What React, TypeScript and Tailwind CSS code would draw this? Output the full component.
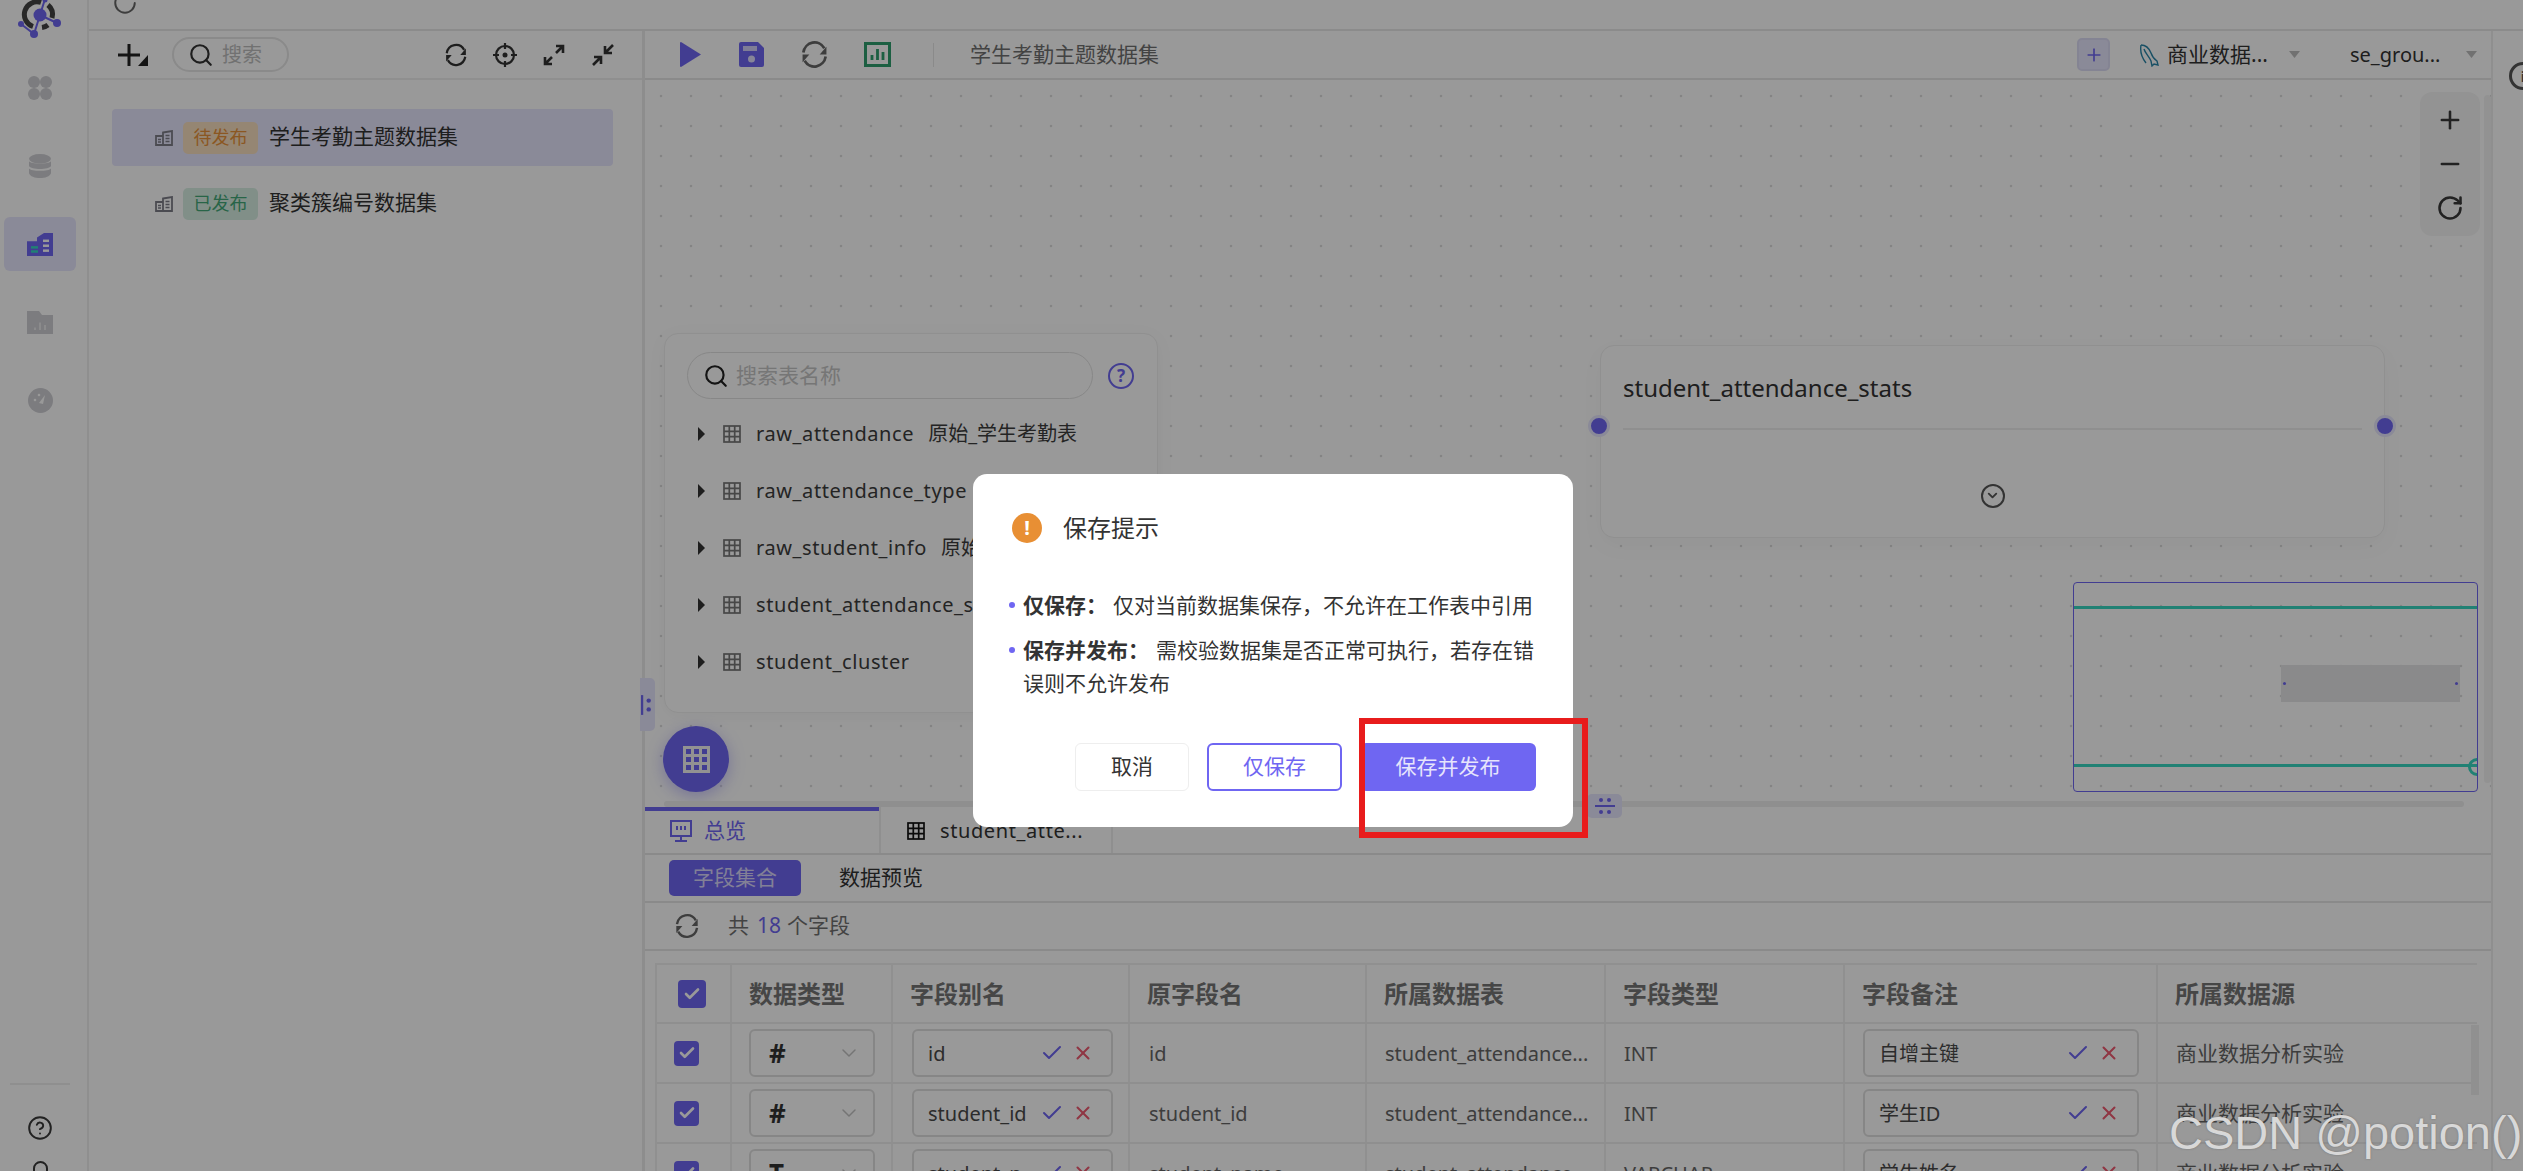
import React from "react";
import { Check, ChevronDown, Plus, Minus, RotateCw, X, Search, CircleHelp } from "lucide-react";

const Sync = ({ className = "" }: { className?: string }) => (
  <svg viewBox="0 0 28 28" className={className} fill="none" stroke="currentColor">
    <path d="M3.2 12A11 11.5 0 0 1 23.5 8" strokeWidth="2.6" />
    <path d="M24.8 16A11 11.5 0 0 1 4.5 20" strokeWidth="2.6" />
    <path d="M25.5 6.5v7.5h-6.5z" fill="currentColor" stroke="none" />
    <path d="M2.5 21.5v-7.500h6.500z" fill="currentColor" stroke="none" />
  </svg>
);

const GridIcon = ({ className = "" }: { className?: string }) => (
  <svg viewBox="0 0 18 18" className={className} fill="none" stroke="currentColor" strokeWidth="1.7">
    <rect x="1" y="1" width="16" height="16" />
    <path d="M6.300 1v16M11.700 1v16M1 6.300h16M1 11.700h16" />
  </svg>
);

const DatasetIcon = ({ className = "", a = "currentColor", b = "#ffffff", c = "#ffffff" }: { className?: string; a?: string; b?: string; c?: string }) => (
  <svg viewBox="0 0 26 28" preserveAspectRatio="none" className={className}>
    <path d="M0 10h10V5.500L17 0h9v28H0z" fill={a} />
    <rect x="4" y="16" width="7" height="3" fill={c} />
    <rect x="4" y="21" width="7" height="3" fill={c} />
    <rect x="16" y="8" width="6" height="3" fill={b} />
    <rect x="16" y="14" width="6" height="3" fill={b} />
    <rect x="16" y="20" width="6" height="3" fill={b} />
  </svg>
);

const SmallDataset = () => (
  <svg viewBox="0 0 18 16" className="h-[16px] w-[18px] text-[#7e7e88]" fill="none" stroke="currentColor" strokeWidth="1.800">
    <path d="M1 6h7v9H1zM8 2.500L17 1v14H8z" />
    <path d="M10.500 5.500h4M10.500 8.500h4M10.500 11.500h4M3 9.500h3M3 12h3" strokeWidth="1.300" />
  </svg>
);

const TableRowItem = ({ name, note }: { name: string; note?: string }) => (
  <div className="flex h-[57px] items-center">
    <svg viewBox="0 0 7 14" className="h-[14px] w-[7px] text-[#333]"><path d="M0 0l7 7-7 7z" fill="currentColor" /></svg>
    <GridIcon className="ml-[18px] h-[18px] w-[18px] text-[#777]" />
    <span className="ml-[15px] whitespace-nowrap text-[20px] tracking-[0.6px] text-[#3c3c3c]">{name}</span>
    {note && <span className="ml-[14px] whitespace-nowrap text-[20px] text-[#3c3c3c]">{note}</span>}
  </div>
);

const Editable = ({ text, w }: { text: string; w: string }) => (
  <div className={`flex h-[48px] items-center rounded-[6px] border-2 border-[#e0e0e0] pl-[14px] pr-[17px] ${w}`}>
    <span className="min-w-0 flex-1 truncate pt-[2px] text-[20px] text-[#4a4a4a]">{text}</span>
    <Check className="ml-[2px] h-[24px] w-[24px] shrink-0 text-[#6f66f2]" strokeWidth={2} />
    <X className="ml-[8px] h-[22px] w-[22px] shrink-0 text-[#ef5a70]" strokeWidth={2.200} />
  </div>
);

const Box = ({ big }: { big?: boolean }) => (
  <div className={`flex items-center justify-center rounded-[4px] bg-[#6f66f2] ${big ? "h-[28px] w-[28px]" : "h-[25px] w-[25px]"}`}>
    <Check className="h-[18px] w-[18px] text-white" strokeWidth={3.500} />
  </div>
);

const rows = [
  { t: "#", alias: "id", raw: "id", type: "INT", note: "自增主键" },
  { t: "#", alias: "student_id", raw: "student_id", type: "INT", note: "学生ID" },
  { t: "T", alias: "student_name", raw: "student_name", type: "VARCHAR", note: "学生姓名" },
];

const cols = "grid-cols-[73px_161px_237px_237px_239px_239px_313px_314px]";

export default function App() {
  return (
    <div className="relative h-[1171px] w-[2523px] overflow-hidden bg-white font-['Noto_Sans','Noto_Sans_CJK_SC',sans-serif] text-[#333]">
      <div className="flex h-full">
        {/* rail */}
        <aside className="flex h-full w-[89px] shrink-0 flex-col items-start border-r-2 border-[#eeeeee] pl-[4px]">
          <div className="h-[61px] w-full shrink-0">
            <svg viewBox="0 0 48 40" className="ml-[13px] h-[40px] w-[48px]">
              <path d="M16 26.500A12.500 12.500 0 0 1 24 2.500" fill="none" stroke="#444" strokeWidth="5" />
              <path d="M31 5A12.500 12.500 0 0 1 35 18" fill="none" stroke="#444" strokeWidth="5" />
              <path d="M31 25A12.500 12.500 0 0 1 25 27.500" fill="none" stroke="#444" strokeWidth="5" />
              <path d="M28 -1L23 15L17 34M23 15L40 23M17 34L4 24" stroke="#6f66f2" strokeWidth="2" fill="none" />
              <circle cx="23" cy="15" r="6.500" fill="#6f66f2" />
              <circle cx="40" cy="23" r="4" fill="#6f66f2" />
              <circle cx="17" cy="34" r="4" fill="#6f66f2" />
              <circle cx="4" cy="24" r="3" fill="#6f66f2" />
              <circle cx="28" cy="0" r="2.500" fill="#6f66f2" />
            </svg>
          </div>
          <div className="flex h-[54px] w-[72px] items-center justify-center">
            <svg viewBox="0 0 24 24" className="h-[24px] w-[24px] text-[#cfcfd4]" fill="currentColor">
              <ellipse cx="6" cy="6" rx="6" ry="6" /><ellipse cx="18" cy="6" rx="6" ry="6" /><ellipse cx="6" cy="18" rx="6" ry="6" /><ellipse cx="18" cy="18" rx="6" ry="6" />
            </svg>
          </div>
          <div className="mt-[24px] flex h-[54px] w-[72px] items-center justify-center">
            <svg viewBox="0 0 24 30" preserveAspectRatio="none" className="h-[24px] w-[22px] text-[#cfcfd4]" fill="currentColor">
              <ellipse cx="12" cy="6" rx="12" ry="6" />
              <path d="M0 9c2 4 22 4 24 0v6c-2 5-22 5-24 0zM0 18c2 4 22 4 24 0v6c-2 8-22 8-24 0z" />
            </svg>
          </div>
          <div className="mt-[24px] flex h-[54px] w-[72px] items-center justify-center rounded-[6px] bg-[#e7e6fd]">
            <DatasetIcon className="h-[23px] w-[26px]" a="#6f66f2" c="#37d7c1" b="#ffffff" />
          </div>
          <div className="mt-[24px] flex h-[54px] w-[72px] items-center justify-center">
            <svg viewBox="0 0 26 28" preserveAspectRatio="none" className="h-[23px] w-[26px]">
              <path d="M0 0h12l3 5h11v23H0z" fill="#cfcfd4" />
              <path d="M7 20h2v3H7zM12 14h2v9h-2zM17 17h2v6h-2z" fill="#e8e8ea" />
            </svg>
          </div>
          <div className="mt-[24px] flex h-[54px] w-[72px] items-center justify-center">
            <svg viewBox="0 0 25 25" className="h-[25px] w-[25px]">
              <circle cx="12.500" cy="12.500" r="12.500" fill="#cfcfd4" />
              <path d="M11 15l6-8-2 9z" fill="#ffffff" />
              <circle cx="7" cy="12" r="1.300" fill="#fff" /><circle cx="11" cy="7" r="1.300" fill="#fff" />
            </svg>
          </div>
          <div className="flex-1" />
          <div className="ml-[6px] flex h-[88px] w-[60px] shrink-0 flex-col items-center border-t-2 border-[#eeeeee]">
            <CircleHelp className="mt-[30px] h-[26px] w-[26px] shrink-0 text-[#3a3a3a]" strokeWidth={1.800} />
            <div className="mt-[20px] h-[20px] w-[15px] shrink-0 rounded-full border-2 border-[#3a3a3a]" />
          </div>
        </aside>

        <div className="flex min-w-0 flex-1 flex-col">
          {/* top strip */}
          <div className="h-[31px] shrink-0 border-b-2 border-[#e8e8e8] pl-[23px]">
            <RotateCw className="-mt-[10px] h-[26px] w-[26px] text-[#666]" strokeWidth={1.800} />
          </div>

          <div className="flex min-h-0 flex-1">
            {/* sidebar */}
            <section className="flex w-[556px] shrink-0 flex-col border-r-[3px] border-[#ececec]">
              <div className="flex h-[49px] shrink-0 items-center border-b-2 border-[#eeeeee] pl-[29px] pr-[27px]">
                <svg viewBox="0 0 30 22" className="h-[22px] w-[30px] text-[#222]" fill="currentColor">
                  <path d="M9.500 0h3v9.500H22v3h-9.500V22h-3v-9.500H0v-3h9.500z" />
                  <path d="M30 11v11H20z" />
                </svg>
                <div className="ml-[24px] flex h-[35px] w-[117px] items-center rounded-full border-2 border-[#e6e6e6] pl-[14px]">
                  <Search className="h-[26px] w-[26px] shrink-0 text-[#333]" strokeWidth={2} />
                  <span className="ml-[8px] text-[20px] text-[#bdbdbd]">搜索</span>
                </div>
                <div className="ml-auto flex items-center gap-[25px] text-[#333]">
                  <Sync className="h-[24px] w-[24px]" />
                  <svg viewBox="0 0 24 24" className="h-[24px] w-[24px]" fill="none" stroke="currentColor" strokeWidth="2.200">
                    <circle cx="12" cy="12" r="9" /><circle cx="12" cy="12" r="2.500" fill="currentColor" stroke="none" /><path d="M12 0v6M12 18v6M0 12h6M18 12h6" />
                  </svg>
                  <svg viewBox="0 0 24 24" className="h-[24px] w-[24px]" fill="none" stroke="currentColor" strokeWidth="2.600">
                    <path d="M14 10l7-7M14 3h7v7M10 14l-7 7M3 14v7h7" />
                  </svg>
                  <svg viewBox="0 0 24 24" className="h-[24px] w-[24px]" fill="none" stroke="currentColor" strokeWidth="2.600">
                    <path d="M22 2l-8 8M14 3v7h7M2 22l8-8M3 14h7v7" />
                  </svg>
                </div>
              </div>
              <div className="flex flex-col pl-[23px] pt-[29px]">
                <div className="flex h-[57px] w-[501px] items-center rounded-[4px] bg-[#e7e6fd] pl-[43px]">
                  <SmallDataset />
                  <span className="ml-[10px] flex h-[32px] w-[75px] items-center justify-center rounded-[5px] bg-[#f9dfc0] text-[18px] text-[#e8923a]">待发布</span>
                  <span className="ml-[11px] pb-[2px] text-[21px] text-[#333]">学生考勤主题数据集</span>
                </div>
                <div className="mt-[9px] flex h-[57px] w-[501px] items-center pl-[43px]">
                  <SmallDataset />
                  <span className="ml-[10px] flex h-[32px] w-[75px] items-center justify-center rounded-[5px] bg-[#d8efe3] text-[18px] text-[#44a878]">已发布</span>
                  <span className="ml-[11px] pb-[2px] text-[21px] text-[#333]">聚类簇编号数据集</span>
                </div>
              </div>
            </section>

            {/* main */}
            <main className="flex w-[1848px] shrink-0 flex-col border-r-2 border-[#eeeeee]">
              <div className="flex h-[49px] shrink-0 items-center border-b-2 border-[#e6e6e6] pl-[35px] pr-[14px]">
                <svg viewBox="0 0 21 25" className="h-[25px] w-[21px] text-[#6f66f2]"><path d="M1 0l20 12.500L1 25q-1 0-1-1V1q0-1 1-1z" fill="currentColor" /></svg>
                <svg viewBox="0 0 25 25" className="ml-[38px] h-[25px] w-[25px]">
                  <path d="M2 0h17l6 6v17q0 2-2 2H2q-2 0-2-2V2q0-2 2-2z" fill="#6f66f2" />
                  <rect x="4" y="4" width="14" height="5" fill="#ffffff" opacity=".7" />
                  <circle cx="12.500" cy="17" r="3.500" fill="#ffffff" opacity=".8" />
                </svg>
                <Sync className="ml-[36px] h-[29px] w-[29px] text-[#666]" />
                <svg viewBox="0 0 27 25" className="ml-[35px] h-[25px] w-[27px] text-[#2f9e6e]" fill="none" stroke="currentColor" strokeWidth="3">
                  <rect x="1.500" y="1.500" width="24" height="22" />
                  <path d="M8 18v-5M13.500 18V7M19 18v-8" strokeWidth="2.800" />
                </svg>
                <div className="ml-[42px] h-[24px] w-[1px] bg-[#e6e6e6]" />
                <span className="ml-[36px] text-[21px] text-[#707070]">学生考勤主题数据集</span>
                <div className="ml-auto flex h-[33px] w-[33px] items-center justify-center rounded-[5px] border-2 border-[#dddcf5] bg-[#e7e6fd]">
                  <Plus className="h-[20px] w-[20px] text-[#6f66f2]" strokeWidth={2} />
                </div>
                <svg viewBox="0 0 20 24" className="ml-[29px] h-[24px] w-[20px] text-[#2b86a8]" fill="none" stroke="currentColor" strokeWidth="1.400">
                  <path d="M2 2c5 0 8 3 10 8 1 3 3 6 6 8l1 4-4-1-2 2-1-5C10 13 6 10 5 6" />
                  <path d="M2 2c-1 6 1 13 5 18" />
                </svg>
                <span className="ml-[8px] w-[101px] whitespace-nowrap text-[21px] text-[#333]">商业数据...</span>
                <svg viewBox="0 0 11 7" className="ml-[21px] h-[7px] w-[11px] text-[#bdbdbd]"><path d="M0 0h11L5.500 7z" fill="currentColor" /></svg>
                <span className="ml-[50px] w-[95px] whitespace-nowrap text-[20px] text-[#333]">se_grou...</span>
                <svg viewBox="0 0 11 7" className="ml-[21px] h-[7px] w-[11px] text-[#bdbdbd]"><path d="M0 0h11L5.500 7z" fill="currentColor" /></svg>
              </div>

              {/* canvas */}
              <div className="relative h-[727px] shrink-0 bg-[radial-gradient(circle,#dcdcdc_1.4px,transparent_1.6px)] bg-[length:30px_30px] bg-[position:1px_1px]">
                <div className="absolute left-[19px] top-[253px] h-[380px] w-[494px] rounded-[14px] border border-[#f0f0f0] bg-white px-[22px] pt-[18px] shadow-[0_4px_20px_rgba(0,0,0,0.04)]">
                  <div className="flex items-center">
                    <div className="flex h-[47px] w-[406px] items-center rounded-full border border-[#e2e2e2] pl-[15px]">
                      <Search className="h-[26px] w-[26px] text-[#222]" strokeWidth={2} />
                      <span className="ml-[7px] text-[21px] text-[#c5c5c5]">搜索表名称</span>
                    </div>
                    <div className="ml-[15px] flex h-[26px] w-[26px] items-center justify-center rounded-full border-[2.500px] border-[#6f66f2] text-[17px] font-bold text-[#6f66f2]">?</div>
                  </div>
                  <div className="ml-[11px] mt-[6px]">
                    <TableRowItem name="raw_attendance" note="原始_学生考勤表" />
                    <TableRowItem name="raw_attendance_type" />
                    <TableRowItem name="raw_student_info" note="原始" />
                    <TableRowItem name="student_attendance_stats" />
                    <TableRowItem name="student_cluster" />
                  </div>
                </div>

                <div className="absolute left-[-5px] top-[598px] flex h-[53px] w-[15px] items-center rounded-r-[5px] bg-[#e7e6fd] pl-[1px]">
                  <svg viewBox="0 0 10 18" className="h-[20px] w-[11px] text-[#6f66f2]" fill="currentColor"><rect width="2" height="18" x="0" /><circle cx="7" cy="5" r="2" /><circle cx="7" cy="13" r="2" /></svg>
                </div>

                <div className="absolute left-[18px] top-[646px] flex h-[66px] w-[66px] items-center justify-center rounded-full bg-[#6f66f2] shadow-[0_4px_16px_rgba(111,102,242,0.4)]">
                  <svg viewBox="0 0 27 27" className="h-[27px] w-[27px] text-[#f4f4f4]">
                    <path fillRule="evenodd" d="M0 0h27v27H0zM3 3v5h5V3zM11 3v5h5V3zM19 3v5h5V3zM3 11v5h5v-5zM11 11v5h5v-5zM19 11v5h5v-5zM3 19v5h5v-5zM11 19v5h5v-5zM19 19v5h5v-5z" fill="currentColor" />
                  </svg>
                </div>

                <div className="absolute left-[955px] top-[265px] flex h-[193px] w-[785px] flex-col rounded-[14px] border border-[#f0f0f0] bg-white px-[22px] shadow-[0_8px_24px_rgba(0,0,0,0.03)]">
                  <div className="flex h-[84px] shrink-0 items-center border-b-2 border-[#eeeeee] pt-[1px] text-[24px] text-[#333]">student_attendance_stats</div>
                  <div className="flex flex-1 items-center justify-center pt-[24px]">
                    <div className="flex h-[24px] w-[24px] items-center justify-center rounded-full border-2 border-[#555]">
                      <ChevronDown className="h-[15px] w-[15px] text-[#555]" strokeWidth={3} />
                    </div>
                  </div>
                </div>
                <div className="absolute left-[943px] top-[335px] h-[22px] w-[22px] rounded-full border-[3px] border-[#e7e6fd] bg-[#6f66f2]" />
                <div className="absolute left-[1729px] top-[335px] h-[22px] w-[22px] rounded-full border-[3px] border-[#e7e6fd] bg-[#6f66f2]" />

                <div className="absolute left-[1775px] top-[12px] flex h-[144px] w-[60px] flex-col items-center justify-between rounded-[12px] bg-[#f6f6f6] py-[14px] text-[#3a3a3a]">
                  <Plus className="h-[28px] w-[28px]" strokeWidth={2.200} />
                  <Minus className="h-[28px] w-[28px]" strokeWidth={2.200} />
                  <RotateCw className="h-[28px] w-[28px]" strokeWidth={2.200} />
                </div>
                <div className="absolute left-[1839px] top-[15px] h-[688px] w-[7px] rounded-[4px] bg-[#f4f4f4]" />

                <div className="absolute left-[1428px] top-[502px] h-[210px] w-[405px] overflow-hidden rounded-[4px] border border-[#6f66f2]">
                  <div className="absolute left-0 right-0 top-[23px] h-[3px] bg-[#37d7c1]" />
                  <div className="absolute bottom-[24px] left-0 right-0 h-[3px] bg-[#37d7c1]" />
                  <div className="absolute -right-[9px] bottom-[15px] h-[18px] w-[18px] rounded-full border-[3px] border-[#37d7c1]" />
                  <div className="absolute left-[207px] top-[82px] flex h-[37px] w-[179px] items-center justify-between bg-[#e6e6e8] px-[2px]">
                    <div className="h-[3px] w-[3px] rounded-full bg-[#6f66f2]" />
                    <div className="h-[3px] w-[3px] rounded-full bg-[#6f66f2]" />
                  </div>
                </div>

                <div className="absolute left-[19px] top-[721px] h-[6px] w-[1800px] rounded-[3px] bg-[#eeeeee]" />
                <div className="absolute left-[942px] top-[714px] flex h-[24px] w-[35px] items-center justify-center rounded-[5px] bg-[#e7e6fd]">
                  <svg viewBox="0 0 20 18" className="h-[18px] w-[20px] text-[#6f66f2]" fill="currentColor"><circle cx="6" cy="3" r="2" /><circle cx="14" cy="3" r="2" /><rect y="8" width="20" height="2" /><circle cx="6" cy="15" r="2" /><circle cx="14" cy="15" r="2" /></svg>
                </div>
              </div>

              {/* bottom */}
              <div className="flex min-h-0 flex-1 flex-col overflow-hidden">
                <div className="flex h-[48px] shrink-0 border-b-2 border-[#e6e6e6]">
                  <div className="flex w-[234px] items-center border-t-4 border-[#6f66f2] pb-[2px] pl-[25px] text-[#6f66f2]">
                    <svg viewBox="0 0 22 22" className="h-[22px] w-[22px]" fill="none" stroke="currentColor" strokeWidth="2">
                      <rect x="1" y="1" width="20" height="15" /><path d="M11 16v5M5 21h12M7 6v4M11 6v4M15 6v4" />
                    </svg>
                    <span className="ml-[12px] text-[21px]">总览</span>
                  </div>
                  <div className="flex w-[234px] items-center border-l-2 border-r-2 border-[#eeeeee] pl-[26px] pt-[1px]">
                    <GridIcon className="h-[18px] w-[18px] text-[#111]" />
                    <span className="ml-[15px] whitespace-nowrap text-[20px] tracking-[0.6px] text-[#333]">student_atte...</span>
                  </div>
                </div>
                <div className="flex h-[48px] shrink-0 items-center border-b-2 border-[#e6e6e6] pl-[24px]">
                  <div className="flex h-[36px] w-[132px] items-center justify-center rounded-[5px] bg-[#6f66f2] text-[21px] text-[#d9d6fb]">字段集合</div>
                  <span className="ml-[38px] text-[21px] text-[#333]">数据预览</span>
                </div>
                <div className="flex h-[48px] shrink-0 items-center border-b-2 border-[#e6e6e6] pl-[29px] text-[21px] text-[#707070]">
                  <Sync className="h-[26px] w-[26px] text-[#666]" />
                  <span className="ml-[28px]">共</span>
                  <span className="ml-[8px] text-[#6f66f2]">18</span>
                  <span className="ml-[6px]">个字段</span>
                </div>
                <div className="relative ml-[10px] mt-[12px] w-[1822px] border-l-2 border-t-2 border-[#f0f0f0]">
                  <div className={`grid h-[59px] ${cols} border-b-2 border-[#eeeeee] text-[24px] font-bold text-[#757575]`}>
                    <div className="flex items-center justify-center pr-[3px]"><Box big /></div>
                    {["数据类型", "字段别名", "原字段名", "所属数据表", "字段类型", "字段备注", "所属数据源"].map((h) => (
                      <div key={h} className="flex items-center border-l-2 border-[#f0f0f0] pl-[17px]">{h}</div>
                    ))}
                  </div>
                  {rows.map((r) => (
                    <div key={r.alias} className={`grid h-[60px] ${cols} border-b-2 border-[#eeeeee] text-[20px] text-[#666]`}>
                      <div className="flex items-center pl-[17px]"><Box /></div>
                      <div className="flex items-center border-l-2 border-[#f0f0f0] pl-[17px]">
                        <div className="flex h-[48px] w-[126px] items-center justify-between rounded-[6px] border-2 border-[#e0e0e0] pl-[18px] pr-[12px]">
                          <span className="text-[26px] font-bold leading-none text-[#333]">{r.t}</span>
                          <ChevronDown className="h-[24px] w-[24px] text-[#c4c4c4]" strokeWidth={1.500} />
                        </div>
                      </div>
                      <div className="flex items-center border-l-2 border-[#f0f0f0] pl-[19px]"><Editable text={r.alias} w="w-[201px]" /></div>
                      <div className="flex items-center border-l-2 border-[#f0f0f0] pl-[19px] pt-[2px]">{r.raw}</div>
                      <div className="flex items-center border-l-2 border-[#f0f0f0] pl-[18px] pt-[2px]">student_attendance...</div>
                      <div className="flex items-center border-l-2 border-[#f0f0f0] pl-[18px] pt-[2px]">{r.type}</div>
                      <div className="flex items-center border-l-2 border-[#f0f0f0] pl-[18px]"><Editable text={r.note} w="w-[276px]" /></div>
                      <div className="flex items-center border-l-2 border-[#f0f0f0] pl-[18px] pt-[2px] text-[21px]">商业数据分析实验</div>
                    </div>
                  ))}
                  <div className="absolute left-[1814px] top-[60px] h-[70px] w-[8px] bg-[#f0f0f0]" />
                </div>
              </div>
            </main>

            <div className="min-w-0 flex-1 overflow-hidden">
              <div className="ml-[16px] mt-[31px] flex h-[28px] w-[28px] shrink-0 items-center justify-center rounded-full border-[3px] border-[#555] text-[15px] font-bold text-[#555]">i</div>
            </div>
          </div>
        </div>
      </div>

      {/* modal layer */}
      <div className="absolute inset-0 bg-black/40" />
      <div className="absolute left-[973px] top-[474px] h-[353px] w-[600px] rounded-[14px] bg-white pl-[39px] pt-[39px]">
        <div className="flex h-[30px] items-center">
          <div className="flex h-[30px] w-[30px] items-center justify-center rounded-full bg-[#e88f34] text-[20px] font-bold leading-none text-white">!</div>
          <span className="ml-[21px] text-[24px] text-[#333]">保存提示</span>
        </div>
        <div className="mt-[46px] flex w-[523px] text-[21px] leading-[33px] text-[#333]">
          <span className="-ml-[3px] mr-[8px] mt-[13px] h-[6px] w-[6px] shrink-0 rounded-full bg-[#6f66f2]" />
          <p><b className="font-bold">仅保存：</b><span className="ml-[6px]">仅对当前数据集保存，不允许在工作表中引用</span></p>
        </div>
        <div className="mt-[12px] flex w-[523px] text-[21px] leading-[33px] text-[#333]">
          <span className="-ml-[3px] mr-[8px] mt-[13px] h-[6px] w-[6px] shrink-0 rounded-full bg-[#6f66f2]" />
          <p><b className="font-bold">保存并发布：</b><span className="ml-[7px]">需校验数据集是否正常可执行，若存在错误则不允许发布</span></p>
        </div>
        <div className="mt-[43px] flex items-center gap-[18px] pl-[63px]">
          <button className="h-[48px] w-[114px] rounded-[6px] border border-[#eeeeee] bg-white text-[21px] text-[#333]">取消</button>
          <button className="h-[48px] w-[135px] rounded-[6px] border-2 border-[#6f66f2] bg-white text-[21px] text-[#6f66f2]">仅保存</button>
          <button className="h-[48px] w-[176px] rounded-[6px] bg-[#6f66f2] text-[21px] text-[#e6e4fc]">保存并发布</button>
        </div>
      </div>
      <div className="absolute left-[1359px] top-[718px] h-[120px] w-[229px] border-[6px] border-[#e81c1c]" />
      <div className="absolute left-[2169px] top-[1103px] whitespace-nowrap font-['Liberation_Sans',sans-serif] text-[47px] leading-[60px] text-[#d8d8d8] [text-shadow:0_0_2px_rgba(80,80,80,0.5)]">CSDN @potion()</div>
    </div>
  );
}
